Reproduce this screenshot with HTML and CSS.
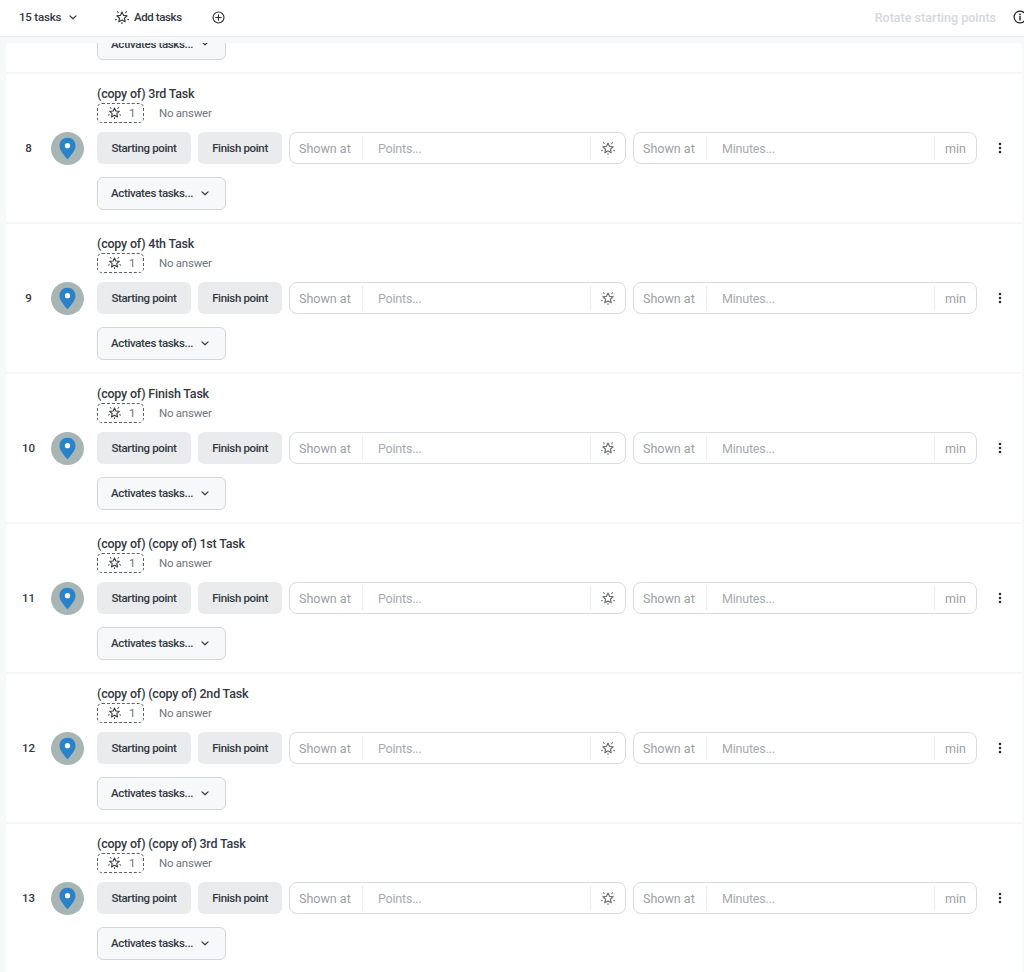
FILE: index.html
```html
<!DOCTYPE html>
<html lang="en">
<head>
<meta charset="utf-8">
<title>Tasks</title>
<link rel="stylesheet" href="styles.css">
</head>
<body>
<svg class="defs" width="0" height="0" aria-hidden="true">
  <symbol id="burst" viewBox="0 0 16 16">
    <path d="M8 2.400l1.700 3.700 4.200.5-3.100 2.800.9 4.100L8 11.400l-3.700 2.100.9-4.100-3.100-2.800 4.200-.5z" fill="none" stroke="currentColor" stroke-width="1.300" stroke-linejoin="round"/>
    <path d="M12.300 3l.8-1.200M3.700 3l-.8-1.200M14.500 10.800l1.100.4M1.500 10.800l-1.100.4M8 14.400v1.200" fill="none" stroke="currentColor" stroke-width="1.200" stroke-linecap="round"/>
  </symbol>
  <symbol id="chev" viewBox="0 0 10 6">
    <path d="M1.200 1l3.800 3.600L8.800 1" fill="none" stroke="currentColor" stroke-width="1.500" stroke-linecap="round" stroke-linejoin="round"/>
  </symbol>
  <symbol id="pin" viewBox="0 0 18 24">
    <path d="M9 .5C4 .5.5 4.200.5 9c0 5.400 5.400 10.500 8.500 14.500C12.100 19.500 17.500 14.400 17.500 9 17.500 4.200 14 .5 9 .5z" fill="#2a82c9"/>
    <circle cx="9" cy="9" r="2.800" fill="#fff"/>
  </symbol>
  <symbol id="dots" viewBox="0 0 4 12">
    <circle cx="2" cy="2" r="1.300" fill="currentColor"/>
    <circle cx="2" cy="6" r="1.300" fill="currentColor"/>
    <circle cx="2" cy="10" r="1.300" fill="currentColor"/>
  </symbol>
</svg>

<header class="topbar">
  <button class="bar-btn count-btn">15 tasks <svg class="chev"><use href="#chev"/></svg></button>
  <button class="bar-btn add-btn"><svg class="burst"><use href="#burst"/></svg> Add tasks</button>
  <svg class="plus" viewBox="0 0 14 14"><circle cx="7" cy="7" r="5.900" fill="none" stroke="currentColor" stroke-width="1.200"/><path d="M7 4v6M4 7h6" stroke="currentColor" stroke-width="1.200" stroke-linecap="round"/></svg>
  <span class="rotate">Rotate starting points</span>
  <svg class="info" viewBox="0 0 14 14"><circle cx="7" cy="7" r="5.900" fill="none" stroke="currentColor" stroke-width="1.200"/><path d="M7 6.500v3.500" stroke="currentColor" stroke-width="1.400" stroke-linecap="round"/><circle cx="7" cy="4.300" r=".9" fill="currentColor"/></svg>
</header>

<main class="panel">
  <div class="list">
    <div class="row-tail">
      <button class="activates">Activates tasks... <svg class="chev"><use href="#chev"/></svg></button>
    </div>

    <section class="row">
      <div class="num">8</div>
      <div class="avatar"><svg class="pin"><use href="#pin"/></svg></div>
      <div class="body">
        <h3 class="title">(copy of) 3rd Task</h3>
        <div class="meta"><span class="score"><svg class="burst"><use href="#burst"/></svg>1</span><span class="answer">No answer</span></div>
        <div class="controls">
          <button class="point start">Starting point</button>
          <button class="point finish">Finish point</button>
          <div class="field field-points"><span class="pre">Shown at</span><span class="value">Points...</span><span class="post"><svg class="burst"><use href="#burst"/></svg></span></div>
          <div class="field field-minutes"><span class="pre">Shown at</span><span class="value">Minutes...</span><span class="post unit">min</span></div>
          <svg class="dots"><use href="#dots"/></svg>
        </div>
        <button class="activates">Activates tasks... <svg class="chev"><use href="#chev"/></svg></button>
      </div>
    </section>

    <section class="row">
      <div class="num">9</div>
      <div class="avatar"><svg class="pin"><use href="#pin"/></svg></div>
      <div class="body">
        <h3 class="title">(copy of) 4th Task</h3>
        <div class="meta"><span class="score"><svg class="burst"><use href="#burst"/></svg>1</span><span class="answer">No answer</span></div>
        <div class="controls">
          <button class="point start">Starting point</button>
          <button class="point finish">Finish point</button>
          <div class="field field-points"><span class="pre">Shown at</span><span class="value">Points...</span><span class="post"><svg class="burst"><use href="#burst"/></svg></span></div>
          <div class="field field-minutes"><span class="pre">Shown at</span><span class="value">Minutes...</span><span class="post unit">min</span></div>
          <svg class="dots"><use href="#dots"/></svg>
        </div>
        <button class="activates">Activates tasks... <svg class="chev"><use href="#chev"/></svg></button>
      </div>
    </section>

    <section class="row">
      <div class="num">10</div>
      <div class="avatar"><svg class="pin"><use href="#pin"/></svg></div>
      <div class="body">
        <h3 class="title">(copy of) Finish Task</h3>
        <div class="meta"><span class="score"><svg class="burst"><use href="#burst"/></svg>1</span><span class="answer">No answer</span></div>
        <div class="controls">
          <button class="point start">Starting point</button>
          <button class="point finish">Finish point</button>
          <div class="field field-points"><span class="pre">Shown at</span><span class="value">Points...</span><span class="post"><svg class="burst"><use href="#burst"/></svg></span></div>
          <div class="field field-minutes"><span class="pre">Shown at</span><span class="value">Minutes...</span><span class="post unit">min</span></div>
          <svg class="dots"><use href="#dots"/></svg>
        </div>
        <button class="activates">Activates tasks... <svg class="chev"><use href="#chev"/></svg></button>
      </div>
    </section>

    <section class="row">
      <div class="num">11</div>
      <div class="avatar"><svg class="pin"><use href="#pin"/></svg></div>
      <div class="body">
        <h3 class="title">(copy of) (copy of) 1st Task</h3>
        <div class="meta"><span class="score"><svg class="burst"><use href="#burst"/></svg>1</span><span class="answer">No answer</span></div>
        <div class="controls">
          <button class="point start">Starting point</button>
          <button class="point finish">Finish point</button>
          <div class="field field-points"><span class="pre">Shown at</span><span class="value">Points...</span><span class="post"><svg class="burst"><use href="#burst"/></svg></span></div>
          <div class="field field-minutes"><span class="pre">Shown at</span><span class="value">Minutes...</span><span class="post unit">min</span></div>
          <svg class="dots"><use href="#dots"/></svg>
        </div>
        <button class="activates">Activates tasks... <svg class="chev"><use href="#chev"/></svg></button>
      </div>
    </section>

    <section class="row">
      <div class="num">12</div>
      <div class="avatar"><svg class="pin"><use href="#pin"/></svg></div>
      <div class="body">
        <h3 class="title">(copy of) (copy of) 2nd Task</h3>
        <div class="meta"><span class="score"><svg class="burst"><use href="#burst"/></svg>1</span><span class="answer">No answer</span></div>
        <div class="controls">
          <button class="point start">Starting point</button>
          <button class="point finish">Finish point</button>
          <div class="field field-points"><span class="pre">Shown at</span><span class="value">Points...</span><span class="post"><svg class="burst"><use href="#burst"/></svg></span></div>
          <div class="field field-minutes"><span class="pre">Shown at</span><span class="value">Minutes...</span><span class="post unit">min</span></div>
          <svg class="dots"><use href="#dots"/></svg>
        </div>
        <button class="activates">Activates tasks... <svg class="chev"><use href="#chev"/></svg></button>
      </div>
    </section>

    <section class="row">
      <div class="num">13</div>
      <div class="avatar"><svg class="pin"><use href="#pin"/></svg></div>
      <div class="body">
        <h3 class="title">(copy of) (copy of) 3rd Task</h3>
        <div class="meta"><span class="score"><svg class="burst"><use href="#burst"/></svg>1</span><span class="answer">No answer</span></div>
        <div class="controls">
          <button class="point start">Starting point</button>
          <button class="point finish">Finish point</button>
          <div class="field field-points"><span class="pre">Shown at</span><span class="value">Points...</span><span class="post"><svg class="burst"><use href="#burst"/></svg></span></div>
          <div class="field field-minutes"><span class="pre">Shown at</span><span class="value">Minutes...</span><span class="post unit">min</span></div>
          <svg class="dots"><use href="#dots"/></svg>
        </div>
        <button class="activates">Activates tasks... <svg class="chev"><use href="#chev"/></svg></button>
      </div>
    </section>
  </div>
</main>
</body>
</html>
```
FILE: styles.css
```css
* { box-sizing: border-box; }
html, body { height: 100%; }
body {
  margin: 0;
  height: 972px;
  overflow: hidden;
  display: flex;
  flex-direction: column;
  background: #f6f8fa;
  color: #33393f;
  font-family: Roboto, "Noto Sans", sans-serif;
  font-size: 12px;
}
button { font: inherit; color: inherit; cursor: pointer; }
.defs { position: absolute; }

.topbar {
  flex: none;
  height: 37px;
  display: flex;
  align-items: center;
  background: #fff;
  border-bottom: 1px solid #e4e9ee;
  padding: 0 0 2px 19px;
}
.bar-btn {
  border: 0;
  background: none;
  padding: 0;
  display: flex;
  align-items: center;
  font-size: 11.500px;
  font-weight: 500;
  letter-spacing: -.2px;
  white-space: nowrap;
}
.count-btn { gap: 8px; width: 96px; }
.count-btn .chev { width: 8px; height: 5px; }
.add-btn { gap: 5px; width: 97px; letter-spacing: -.4px; }
.add-btn .burst { width: 14px; height: 14px; }
.plus { width: 13px; height: 13px; color: #2b2f33; }
.rotate {
  margin-left: auto;
  font-size: 12.500px;
  font-weight: 500;
  color: #d4d8dc;
}
.info { width: 14px; height: 14px; margin: 0 -3px 0 17px; color: #22262a; flex: none; }

.panel {
  flex: 1;
  min-height: 0;
  overflow: hidden;
  padding: 6px 2px 0 6px;
}
.list { background: #fff; border-radius: 4px 4px 0 0; }

.row-tail {
  height: 29px;
  padding: 0 0 12px 91px;
  display: flex;
  align-items: flex-end;
  overflow: hidden;
}
.row-tail .activates { flex: none; margin-top: 0; }

.row {
  height: 150px;
  display: flex;
  align-items: center;
  border-top: 2px solid #f6f8fa;
}
.num {
  width: 45px;
  text-align: center;
  flex: none;
  font-size: 11.500px;
  font-weight: 500;
}
.avatar {
  width: 33px;
  height: 33px;
  border-radius: 50%;
  background: #a8b5b5;
  display: flex;
  align-items: center;
  justify-content: center;
  flex: none;
}
.pin { width: 17px; height: 23px; }
.body {
  margin-left: 13px;
  flex: 1;
  min-width: 0;
  padding-bottom: 2px;
}
.title {
  margin: 0;
  font-size: 12.500px;
  letter-spacing: -.2px;
  line-height: 18px;
  font-weight: 500;
}
.meta { display: flex; align-items: center; gap: 6px; height: 20px; margin-bottom: 9px; }
.score {
  width: 47px;
  height: 20px;
  border: 1px dashed #5c6166;
  border-radius: 5px;
  display: flex;
  align-items: center;
  gap: 8px;
  padding-left: 10px;
  font-size: 11.500px;
  color: #6a7076;
}
.score .burst { width: 13px; height: 13px; color: #33393f; }
.answer {
  font-size: 11.500px;
  letter-spacing: -.25px;
  color: #6f757b;
  padding: 0 9px;
}
.controls {
  display: flex;
  align-items: center;
  gap: 7px;
  padding-right: 21px;
}
.point {
  flex: none;
  height: 32px;
  border: 0;
  border-radius: 6px;
  background: #e9ebed;
  font-weight: 500;
  font-size: 11.500px;
  letter-spacing: -.35px;
  padding: 0;
}
.start { width: 94px; }
.finish { width: 84px; }
.field {
  height: 32px;
  display: flex;
  align-items: stretch;
  border: 1px solid #d9dcdf;
  border-radius: 8px;
  color: #a6abb0;
  font-size: 12.500px;
  background: #fff;
}
.field-points { flex: 1 1 108px; }
.field-minutes { flex: 1 1 115px; }
.pre, .post {
  flex: none;
  display: flex;
  align-items: center;
  margin: 3px 0;
}
.pre { width: 73px; padding: 2px 0 0 9px; border-right: 1px solid #eceef0; color: #9a9fa4; }
.value { flex: 1 1 0; min-width: 0; padding: 2px 0 0 15px; letter-spacing: -.2px; display: flex; align-items: center; }
.post { width: 35px; justify-content: center; border-left: 1px solid #eceef0; color: #6a7076; }
.post .burst { width: 14px; height: 14px; }
.unit { width: 42px; padding-top: 2px; color: #9a9fa4; }
.dots { width: 4px; height: 12px; margin-left: 14px; margin-right: -1px; flex: none; color: #2b2f33; }

.activates {
  display: flex;
  align-items: center;
  justify-content: space-between;
  width: 129px;
  height: 33px;
  margin-top: 13px;
  padding: 0 16px 0 13px;
  background: #f6f8fa;
  border: 1px solid #d3d7db;
  border-radius: 6px;
  font-size: 11.500px;
  letter-spacing: -.35px;
  font-weight: 500;
  white-space: nowrap;
}
.activates .chev { width: 8px; height: 5px; flex: none; }
```
